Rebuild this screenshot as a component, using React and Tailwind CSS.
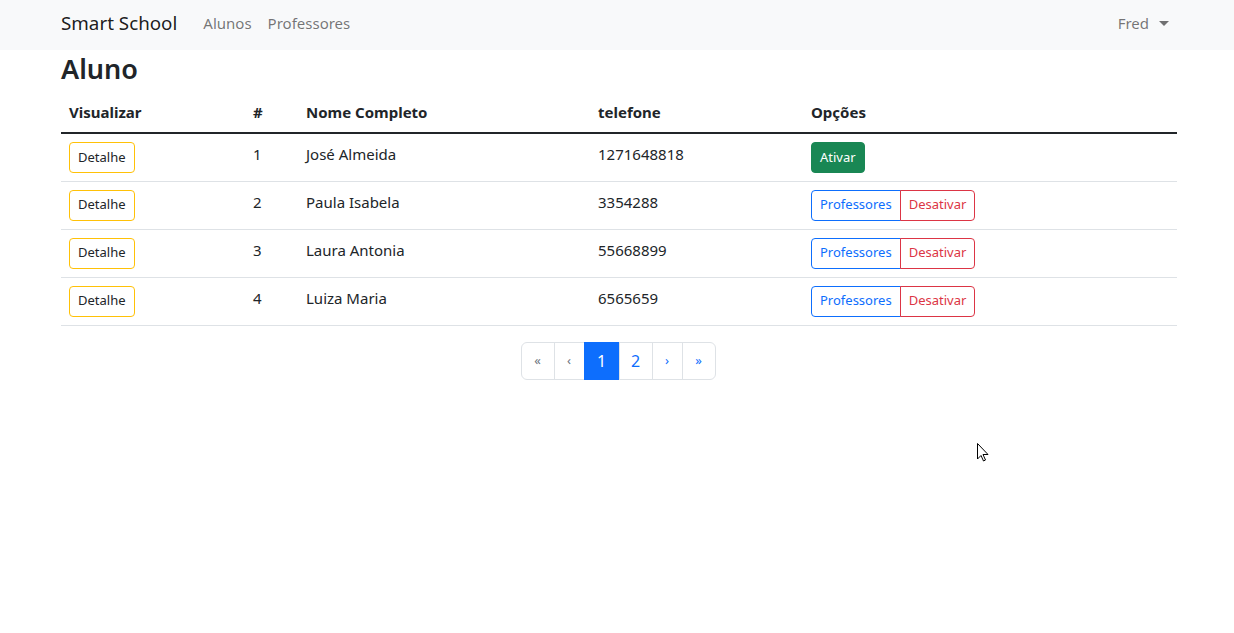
import React from "react";

const rows = [
  { id: 1, nome: "José Almeida", tel: "1271648818", ativo: false },
  { id: 2, nome: "Paula Isabela", tel: "3354288", ativo: true },
  { id: 3, nome: "Laura Antonia", tel: "55668899", ativo: true },
  { id: 4, nome: "Luiza Maria", tel: "6565659", ativo: true },
];

export default function App() {
  return (
    <div
      className="relative min-h-[633px] bg-white text-[#212529]"
      style={{ fontFamily: '"Noto Sans", "Segoe UI", sans-serif' }}
    >
      <nav className="h-[50px] bg-[#f8f9fa]">
        <div className="ml-[61px] flex h-full w-[1116px] items-center pb-[3px]">
          <span className="mr-[26px] text-[18.8px] text-[rgba(0,0,0,0.9)]">Smart School</span>
          <a className="mr-[16px] text-[15px] text-[rgba(0,0,0,0.55)]">Alunos</a>
          <a className="text-[15px] text-[rgba(0,0,0,0.55)]">Professores</a>
          <div className="ml-auto mr-[8px] flex items-center text-[15px] text-[rgba(0,0,0,0.55)]">
            Fred
            <span className="ml-[10px] inline-block h-0 w-0 border-x-[5px] border-t-[5px] border-x-transparent border-t-[rgba(0,0,0,0.55)]" />
          </div>
        </div>
      </nav>
      <div className="ml-[61px] w-[1116px]">
        <h3 className="mt-[2px] h-[40px] text-[27px] font-semibold leading-[34px]">Aluno</h3>
        <table className="w-full border-collapse text-[15px]">
          <thead>
            <tr className="border-b-2 border-[#212529] text-left">
              <th className="w-[184px] px-[8px] py-[8px] font-bold leading-[24px]">Visualizar</th>
              <th className="w-[53px] px-[8px] py-[8px] font-bold">#</th>
              <th className="w-[292px] px-[8px] py-[8px] font-bold">Nome Completo</th>
              <th className="w-[213px] px-[8px] py-[8px] font-bold">telefone</th>
              <th className="px-[8px] py-[8px] font-bold">Opções</th>
            </tr>
          </thead>
          <tbody>
            {rows.map((r) => (
              <tr key={r.id} className="h-[48px] border-b border-[#dee2e6] align-top">
                <td className="px-[8px] pt-[8px]">
                  <button className="h-[31px] rounded-[4px] border border-[#ffc107] px-[8px] text-[13px] text-[#212529]">
                    Detalhe
                  </button>
                </td>
                <td className="px-[8px] pt-[8px] leading-[24px]">{r.id}</td>
                <td className="px-[8px] pt-[8px] leading-[24px]">{r.nome}</td>
                <td className="px-[8px] pt-[8px] leading-[24px]">{r.tel}</td>
                <td className="px-[8px] pt-[8px]">
                  {r.ativo ? (
                    <div className="flex">
                      <button className="h-[31px] rounded-l-[4px] border border-[#0d6efd] px-[8px] text-[13px] text-[#0d6efd]">
                        Professores
                      </button>
                      <button className="-ml-px h-[31px] rounded-r-[4px] border border-[#dc3545] px-[8px] text-[13px] text-[#dc3545]">
                        Desativar
                      </button>
                    </div>
                  ) : (
                    <button className="h-[31px] rounded-[4px] border border-[#198754] bg-[#198754] px-[8px] text-[13px] text-white">
                      Ativar
                    </button>
                  )}
                </td>
              </tr>
            ))}
          </tbody>
        </table>
        <div className="mt-[16px] flex justify-center">
          <ul className="-ml-[2px] flex h-[38px] text-[16px]">
            <li className="flex w-[34px] items-center justify-center rounded-l-[6px] border border-[#dee2e6] text-[13px] text-[#6c757d]">«</li>
            <li className="-ml-px flex w-[31px] items-center justify-center border border-[#dee2e6] text-[13px] text-[#6c757d]">‹</li>
            <li className="-ml-px flex w-[36px] items-center justify-center border border-[#0d6efd] bg-[#0d6efd] text-white">1</li>
            <li className="-ml-px flex w-[34px] items-center justify-center border border-[#dee2e6] text-[#0d6efd]">2</li>
            <li className="-ml-px flex w-[31px] items-center justify-center border border-[#dee2e6] text-[13px] text-[#0d6efd]">›</li>
            <li className="-ml-px flex w-[34px] items-center justify-center rounded-r-[6px] border border-[#dee2e6] text-[13px] text-[#0d6efd]">»</li>
          </ul>
        </div>
      </div>
      <svg className="absolute left-[977px] top-[443px]" width="12" height="19" viewBox="0 0 12 19">
        <path d="M0.5 0.5 L0.5 16 L4 12.5 L6.5 18 L8.5 17 L6 11.5 L11 11.5 Z" fill="white" stroke="black" strokeWidth="1" strokeLinejoin="round" />
      </svg>
    </div>
  );
}
